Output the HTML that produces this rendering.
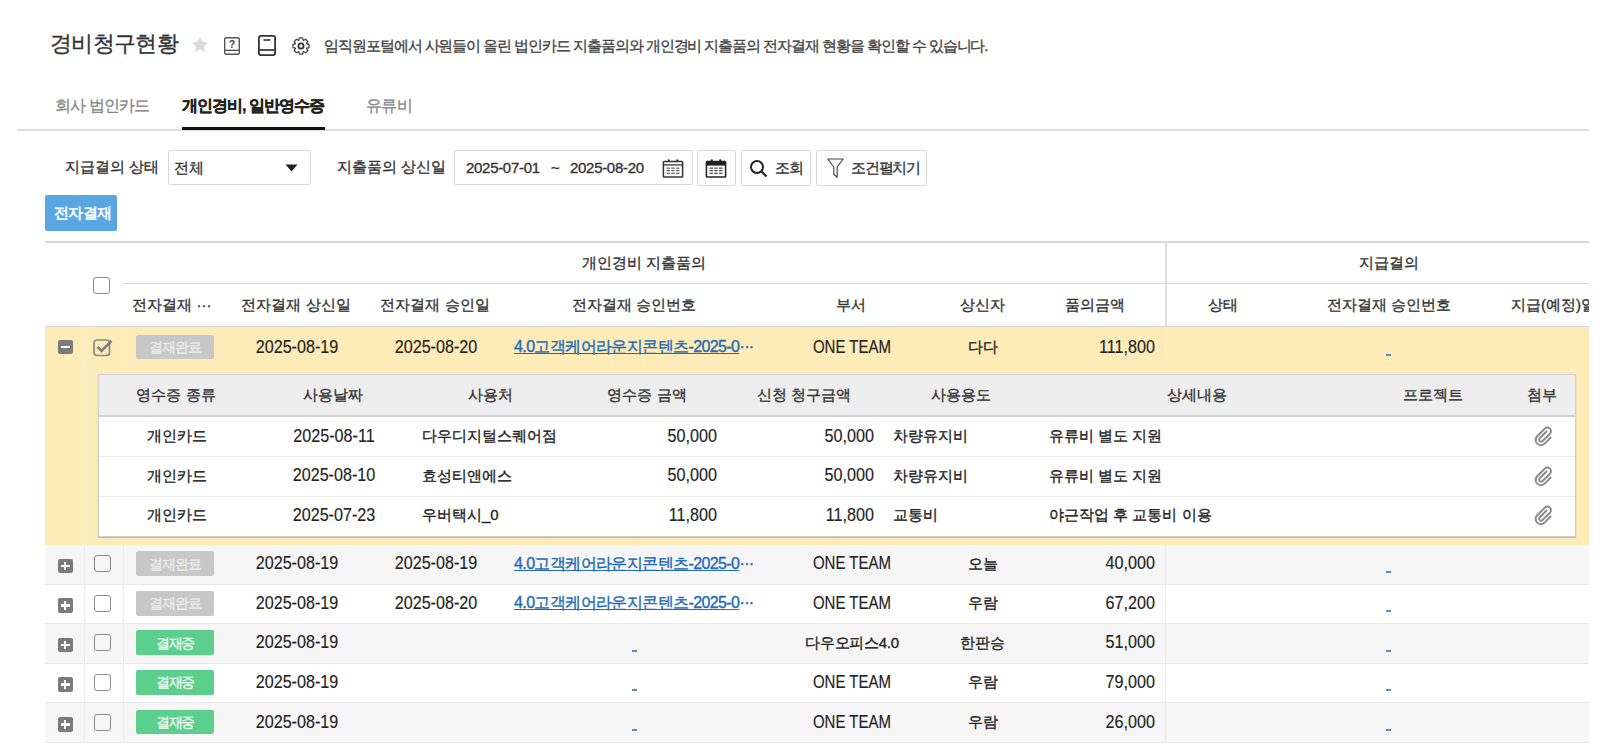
<!DOCTYPE html>
<html><head><meta charset="utf-8">
<style>
*{box-sizing:border-box;margin:0;padding:0}
html,body{width:1600px;height:754px;overflow:hidden;background:#fff}
body{position:relative;font-family:"Liberation Sans",sans-serif;color:#333}
.a{-webkit-text-stroke:0.35px currentColor}
.a{position:absolute;white-space:nowrap;line-height:1}
.box{position:absolute}
.hl{position:absolute;height:1px}
.vl{position:absolute;width:1px}
.c{text-align:center}
.r{text-align:right}
</style></head><body>

<!-- title -->
<div class="a" id="title" style="left:50px;top:33px;font-size:22px;color:#333;letter-spacing:-0.7px">경비청구현황</div>
<svg class="box" style="left:190px;top:35px" width="20" height="20" viewBox="0 0 20 20"><path d="M10 1.5l2.5 5.3 5.7.6-4.3 3.9 1.2 5.7L10 14.1l-5.1 2.9 1.2-5.7L1.8 7.4l5.7-.6z" fill="#d9d9d9"/></svg>
<svg class="box" style="left:222px;top:36px" width="20" height="20" viewBox="0 0 20 20"><rect x="2.7" y="1.7" width="14.6" height="16.6" rx="1.5" fill="none" stroke="#555" stroke-width="1.4"/><line x1="2.7" y1="14.3" x2="17.3" y2="14.3" stroke="#555" stroke-width="1.3"/><text x="10" y="11.8" font-size="10.5" font-weight="bold" text-anchor="middle" fill="#444" font-family="Liberation Sans">?</text></svg>
<svg class="box" style="left:256px;top:34px" width="22" height="23" viewBox="0 0 22 23"><rect x="2.9" y="1.9" width="16.2" height="19.2" rx="2" fill="none" stroke="#333" stroke-width="1.8"/><line x1="2.9" y1="16" x2="19.1" y2="16" stroke="#333" stroke-width="1.7"/><line x1="7.5" y1="6" x2="14.5" y2="6" stroke="#333" stroke-width="1.6"/></svg>
<svg class="box" style="left:290.5px;top:35.5px" width="20" height="20" viewBox="0 0 20 20"><path fill="none" stroke="#444" stroke-width="1.3" stroke-linejoin="round" d="M15.56 7.75 L18.05 8.44 L18.05 11.56 L15.56 12.25 L15.52 12.34 L16.80 14.59 L14.59 16.80 L12.34 15.52 L12.25 15.56 L11.56 18.05 L8.44 18.05 L7.75 15.56 L7.66 15.52 L5.41 16.80 L3.20 14.59 L4.48 12.34 L4.44 12.25 L1.95 11.56 L1.95 8.44 L4.44 7.75 L4.48 7.66 L3.20 5.41 L5.41 3.20 L7.66 4.48 L7.75 4.44 L8.44 1.95 L11.56 1.95 L12.25 4.44 L12.34 4.48 L14.59 3.20 L16.80 5.41 L15.52 7.66Z"/><circle cx="10" cy="10" r="2.6" fill="none" stroke="#333" stroke-width="1.8"/></svg>
<div class="a" id="desc" style="left:324px;top:37.5px;font-size:15px;color:#444;letter-spacing:-1.08px">임직원포털에서 사원들이 올린 법인카드 지출품의와 개인경비 지출품의 전자결재 현황을 확인할 수 있습니다.</div>

<!-- tabs -->
<div class="a" style="left:55px;top:98px;font-size:16px;color:#8a8a8a;letter-spacing:-0.85px">회사 법인카드</div>
<div class="a" style="left:182px;top:98px;font-size:16px;color:#222;font-weight:bold;letter-spacing:-1px">개인경비, 일반영수증</div>
<div class="a" style="left:366px;top:98px;font-size:16px;color:#8a8a8a;letter-spacing:-0.6px">유류비</div>
<div class="hl" style="left:17px;top:129px;width:1572px;height:2px;background:#dedede"></div>
<div class="hl" style="left:182px;top:127px;width:143px;height:3px;background:#111"></div>

<!-- filters -->
<div class="a" style="left:65px;top:159px;font-size:15px;color:#333">지급결의 상태</div>
<div class="box" style="left:168px;top:150px;width:143px;height:35px;border:1px solid #d8d8d8;border-radius:2px"></div>
<div class="a" style="left:174px;top:160px;font-size:15px;color:#333">전체</div>
<svg class="box" style="left:285px;top:164px" width="13" height="8" viewBox="0 0 13 8"><path d="M0.5 0.5h12L6.5 7.5z" fill="#222"/></svg>

<div class="a" style="left:337px;top:159px;font-size:15px;color:#333">지출품의 상신일</div>
<div class="box" style="left:454px;top:150px;width:239px;height:35px;border:1px solid #d8d8d8;border-radius:2px"></div>
<div class="a" style="left:466px;top:160px;font-size:15px;color:#333;letter-spacing:-0.3px">2025-07-01</div><div class="a" style="left:551px;top:160px;font-size:15px;color:#333">~</div><div class="a" style="left:570px;top:160px;font-size:15px;color:#333;letter-spacing:-0.3px">2025-08-20</div>
<svg class="box" style="left:662px;top:158px" width="22" height="20" viewBox="0 0 22 20"><rect x="1.4" y="3.4" width="19.2" height="15.6" rx="0.8" fill="none" stroke="#333" stroke-width="1.5"/><line x1="1.4" y1="6.9" x2="20.6" y2="6.9" stroke="#333" stroke-width="1.3"/><circle cx="6.8" cy="2.4" r="1.1" fill="#333"/><circle cx="15.3" cy="2.4" r="1.1" fill="#333"/><g fill="#555"><rect x="4.5" y="9.6" width="3.5" height="1.1"/><rect x="9.2" y="9.6" width="3.5" height="1.1"/><rect x="14" y="9.6" width="3.5" height="1.1"/><rect x="4.5" y="12.1" width="3.5" height="1.1"/><rect x="9.2" y="12.1" width="3.5" height="1.1"/><rect x="14" y="12.1" width="3.5" height="1.1"/><rect x="4.5" y="14.7" width="3.5" height="1.1"/><rect x="9.2" y="14.7" width="3.5" height="1.1"/><rect x="14" y="14.7" width="3.5" height="1.1"/></g></svg>

<div class="box" style="left:697px;top:150px;width:39px;height:36px;border:1px solid #d8d8d8;border-radius:2px"></div>
<svg class="box" style="left:705px;top:158px" width="22" height="20" viewBox="0 0 22 20"><rect x="1.4" y="3.4" width="19.2" height="15.6" rx="0.8" fill="none" stroke="#222" stroke-width="1.5"/><rect x="1.4" y="3.4" width="19.2" height="4.2" fill="#222"/><circle cx="6.8" cy="2.4" r="1.1" fill="#222"/><circle cx="15.3" cy="2.4" r="1.1" fill="#222"/><g fill="#333"><rect x="4.5" y="9.6" width="3.5" height="1.1"/><rect x="9.2" y="9.6" width="3.5" height="1.1"/><rect x="14" y="9.6" width="3.5" height="1.1"/><rect x="4.5" y="12.1" width="3.5" height="1.1"/><rect x="9.2" y="12.1" width="3.5" height="1.1"/><rect x="14" y="12.1" width="3.5" height="1.1"/><rect x="4.5" y="14.7" width="3.5" height="1.1"/><rect x="9.2" y="14.7" width="3.5" height="1.1"/><rect x="14" y="14.7" width="3.5" height="1.1"/></g></svg>

<div class="box" style="left:741px;top:150px;width:70px;height:36px;border:1px solid #d8d8d8;border-radius:2px"></div>
<svg class="box" style="left:749px;top:159px" width="20" height="19" viewBox="0 0 20 19"><circle cx="8" cy="8" r="6" fill="none" stroke="#222" stroke-width="2"/><line x1="12.3" y1="12.3" x2="17.5" y2="17.5" stroke="#222" stroke-width="2.2"/></svg>
<div class="a" style="left:775px;top:160px;font-size:15px;color:#333;letter-spacing:-0.6px">조회</div>

<div class="box" style="left:816px;top:150px;width:111px;height:36px;border:1px solid #d8d8d8;border-radius:2px"></div>
<svg class="box" style="left:826px;top:157px" width="19" height="22" viewBox="0 0 19 22"><path d="M1.8 2h15.4l-6 8v10.2l-3.4-2.7V10z" fill="none" stroke="#444" stroke-width="1.15" stroke-linejoin="round"/></svg>
<div class="a" style="left:851px;top:160px;font-size:15px;color:#333;letter-spacing:-1.2px">조건펼치기</div>

<div class="box" style="left:45px;top:195px;width:72px;height:36px;background:#5aa6e3;border-radius:2px"></div>
<div class="a" style="left:54px;top:205px;font-size:15px;color:#fff;letter-spacing:-0.6px;-webkit-text-stroke:0.6px #fff">전자결재</div>

<div class="box" style="left:45px;top:241px;width:1544px;height:1.5px;background:#d6d6d6;"></div>
<div class="box" style="left:123px;top:283px;width:1466px;height:1px;background:#dcdcdc;"></div>
<div class="box" style="left:45px;top:325.5px;width:1544px;height:1.5px;background:#d6d6d6;"></div>
<div class="box" style="left:1165px;top:241px;width:1.5px;height:85px;background:#dcdcdc;"></div>
<div class="a" style="left:444px;width:400px;text-align:center;top:253.0px;line-height:20px;font-size:15px;color:#333;">개인경비 지출품의</div>
<div class="a" style="left:1189px;width:400px;text-align:center;top:253.0px;line-height:20px;font-size:15px;color:#333;">지급결의</div>
<div class="box" style="left:92.5px;top:277px;width:17px;height:17px;background:#fff;border:1.6px solid #8c8c8c;border-radius:3px;"></div>
<div class="a" style="left:-28px;width:400px;text-align:center;top:295.0px;line-height:20px;font-size:15px;color:#333;">전자결재 ···</div>
<div class="a" style="left:96px;width:400px;text-align:center;top:295.0px;line-height:20px;font-size:15px;color:#333;">전자결재 상신일</div>
<div class="a" style="left:235px;width:400px;text-align:center;top:295.0px;line-height:20px;font-size:15px;color:#333;">전자결재 승인일</div>
<div class="a" style="left:434px;width:400px;text-align:center;top:295.0px;line-height:20px;font-size:15px;color:#333;">전자결재 승인번호</div>
<div class="a" style="left:651px;width:400px;text-align:center;top:295.0px;line-height:20px;font-size:15px;color:#333;">부서</div>
<div class="a" style="left:782px;width:400px;text-align:center;top:295.0px;line-height:20px;font-size:15px;color:#333;">상신자</div>
<div class="a" style="left:895px;width:400px;text-align:center;top:295.0px;line-height:20px;font-size:15px;color:#333;">품의금액</div>
<div class="a" style="left:1023px;width:400px;text-align:center;top:295.0px;line-height:20px;font-size:15px;color:#333;">상태</div>
<div class="a" style="left:1189px;width:400px;text-align:center;top:295.0px;line-height:20px;font-size:15px;color:#333;">전자결재 승인번호</div>
<div class="box" style="left:1497px;top:295px;width:92px;height:22px;overflow:hidden"><div class="a" style="left:14px;top:0;line-height:20px;font-size:15px;color:#333">지급(예정)일</div></div>
<div class="box" style="left:45px;top:327px;width:1544px;height:218px;background:#fdebb8;"></div>
<div class="box" style="left:84px;top:327px;width:1px;height:218px;background:#f9eed2;"></div>
<div class="box" style="left:123px;top:327px;width:1px;height:41px;background:#f9eed2;"></div>
<div class="box" style="left:1165px;top:327px;width:1px;height:41px;background:#f9eed2;"></div>
<div class="box" style="left:57.8px;top:339.6px;width:14.8px;height:14.8px;background:#7b7b7b;border-radius:2px;"></div>
<div class="box" style="left:60.8px;top:345.8px;width:8.8px;height:2.5px;background:#fff;"></div>
<svg class="box" style="left:93px;top:338px" width="22" height="19" viewBox="0 0 22 19"><rect x="1" y="2" width="15.5" height="15.5" rx="3" fill="none" stroke="#8a8a8a" stroke-width="1.7"/><path d="M4.5 8.8l4 4 10-10" fill="none" stroke="#7d7d7d" stroke-width="2.6"/></svg>
<div class="box" style="left:136px;top:334.7px;width:78px;height:24.6px;background:#c8c8c8;border-radius:2px;"></div>
<div class="a" style="left:-25px;width:400px;text-align:center;top:337.0px;line-height:20px;font-size:14px;color:#ebebeb;letter-spacing:-1.1px;">결재완료</div>
<div class="a" style="left:96.5px;width:400px;text-align:center;transform:scaleX(0.85);transform-origin:center center;top:336.5px;line-height:20px;font-size:19px;color:#222;-webkit-text-stroke:0.15px currentColor;">2025-08-19</div>
<div class="a" style="left:235.5px;width:400px;text-align:center;transform:scaleX(0.85);transform-origin:center center;top:336.5px;line-height:20px;font-size:19px;color:#222;-webkit-text-stroke:0.15px currentColor;">2025-08-20</div>
<div class="a" style="left:514px;top:337px;line-height:20px;font-size:16px;color:#2169b9;letter-spacing:-0.6px"><span style="text-decoration:underline">4.0고객케어라운지콘텐츠-2025-0</span>···</div>
<div class="a" style="left:651.8px;width:400px;text-align:center;transform:scaleX(0.79);transform-origin:center center;top:336.5px;line-height:20px;font-size:19px;color:#222;-webkit-text-stroke:0.15px currentColor;">ONE TEAM</div>
<div class="a" style="left:782.5px;width:400px;text-align:center;top:337.0px;line-height:20px;font-size:15px;color:#222;">다다</div>
<div class="a" style="left:855px;width:300px;text-align:right;transform:scaleX(0.85);transform-origin:right center;top:336.5px;line-height:20px;font-size:19px;color:#222;-webkit-text-stroke:0.15px currentColor;">111,800</div>
<div class="box" style="left:1386px;top:354px;width:5px;height:2px;background:#5a8cc4;"></div>
<div class="box" style="left:98px;top:374px;width:1478px;height:163px;background:#fff;border:1px solid #cfcfcf;box-shadow:0 1px 1px #bdbdbd;"></div>
<div class="box" style="left:99px;top:375px;width:1476px;height:40px;background:#eeeeee;"></div>
<div class="box" style="left:99px;top:415px;width:1476px;height:1.5px;background:#d3d3d3;"></div>
<div class="box" style="left:99px;top:456px;width:1476px;height:1px;background:#ebebeb;"></div>
<div class="box" style="left:99px;top:496px;width:1476px;height:1px;background:#ebebeb;"></div>
<div class="a" style="left:-24px;width:400px;text-align:center;top:385.0px;line-height:20px;font-size:15px;color:#333;">영수증 종류</div>
<div class="a" style="left:133px;width:400px;text-align:center;top:385.0px;line-height:20px;font-size:15px;color:#333;">사용날짜</div>
<div class="a" style="left:290px;width:400px;text-align:center;top:385.0px;line-height:20px;font-size:15px;color:#333;">사용처</div>
<div class="a" style="left:447px;width:400px;text-align:center;top:385.0px;line-height:20px;font-size:15px;color:#333;">영수증 금액</div>
<div class="a" style="left:604px;width:400px;text-align:center;top:385.0px;line-height:20px;font-size:15px;color:#333;">신청 청구금액</div>
<div class="a" style="left:761px;width:400px;text-align:center;top:385.0px;line-height:20px;font-size:15px;color:#333;">사용용도</div>
<div class="a" style="left:997px;width:400px;text-align:center;top:385.0px;line-height:20px;font-size:15px;color:#333;">상세내용</div>
<div class="a" style="left:1233px;width:400px;text-align:center;top:385.0px;line-height:20px;font-size:15px;color:#333;">프로젝트</div>
<div class="a" style="left:1342px;width:400px;text-align:center;top:385.0px;line-height:20px;font-size:15px;color:#333;">첨부</div>
<div class="a" style="left:-23.5px;width:400px;text-align:center;top:426.0px;line-height:20px;font-size:15px;color:#222;">개인카드</div>
<div class="a" style="left:133.5px;width:400px;text-align:center;transform:scaleX(0.85);transform-origin:center center;top:425.5px;line-height:20px;font-size:19px;color:#222;-webkit-text-stroke:0.15px currentColor;">2025-08-11</div>
<div class="a" style="left:422px;top:426.0px;line-height:20px;font-size:15px;color:#222;">다우디지털스퀘어점</div>
<div class="a" style="left:417px;width:300px;text-align:right;transform:scaleX(0.85);transform-origin:right center;top:425.5px;line-height:20px;font-size:19px;color:#222;-webkit-text-stroke:0.15px currentColor;">50,000</div>
<div class="a" style="left:574px;width:300px;text-align:right;transform:scaleX(0.85);transform-origin:right center;top:425.5px;line-height:20px;font-size:19px;color:#222;-webkit-text-stroke:0.15px currentColor;">50,000</div>
<div class="a" style="left:892.5px;top:426.0px;line-height:20px;font-size:15px;color:#222;">차량유지비</div>
<div class="a" style="left:1049px;top:426.0px;line-height:20px;font-size:15px;color:#222;">유류비 별도 지원</div>
<svg class="box" style="left:1533px;top:426px" width="21" height="21" viewBox="0 0 21 21"><path d="M13.5 5.5l-7 7a2 2 0 0 0 2.8 2.8l7.6-7.6a3.6 3.6 0 0 0-5.1-5.1l-7.6 7.6a5.2 5.2 0 0 0 7.4 7.4l6-6" fill="none" stroke="#8a8a8a" stroke-width="2" stroke-linecap="round"/></svg>
<div class="a" style="left:-23.5px;width:400px;text-align:center;top:465.5px;line-height:20px;font-size:15px;color:#222;">개인카드</div>
<div class="a" style="left:133.5px;width:400px;text-align:center;transform:scaleX(0.85);transform-origin:center center;top:465.0px;line-height:20px;font-size:19px;color:#222;-webkit-text-stroke:0.15px currentColor;">2025-08-10</div>
<div class="a" style="left:422px;top:465.5px;line-height:20px;font-size:15px;color:#222;">효성티앤에스</div>
<div class="a" style="left:417px;width:300px;text-align:right;transform:scaleX(0.85);transform-origin:right center;top:465.0px;line-height:20px;font-size:19px;color:#222;-webkit-text-stroke:0.15px currentColor;">50,000</div>
<div class="a" style="left:574px;width:300px;text-align:right;transform:scaleX(0.85);transform-origin:right center;top:465.0px;line-height:20px;font-size:19px;color:#222;-webkit-text-stroke:0.15px currentColor;">50,000</div>
<div class="a" style="left:892.5px;top:465.5px;line-height:20px;font-size:15px;color:#222;">차량유지비</div>
<div class="a" style="left:1049px;top:465.5px;line-height:20px;font-size:15px;color:#222;">유류비 별도 지원</div>
<svg class="box" style="left:1533px;top:465.5px" width="21" height="21" viewBox="0 0 21 21"><path d="M13.5 5.5l-7 7a2 2 0 0 0 2.8 2.8l7.6-7.6a3.6 3.6 0 0 0-5.1-5.1l-7.6 7.6a5.2 5.2 0 0 0 7.4 7.4l6-6" fill="none" stroke="#8a8a8a" stroke-width="2" stroke-linecap="round"/></svg>
<div class="a" style="left:-23.5px;width:400px;text-align:center;top:505.0px;line-height:20px;font-size:15px;color:#222;">개인카드</div>
<div class="a" style="left:133.5px;width:400px;text-align:center;transform:scaleX(0.85);transform-origin:center center;top:504.5px;line-height:20px;font-size:19px;color:#222;-webkit-text-stroke:0.15px currentColor;">2025-07-23</div>
<div class="a" style="left:422px;top:505.0px;line-height:20px;font-size:15px;color:#222;">우버택시_0</div>
<div class="a" style="left:417px;width:300px;text-align:right;transform:scaleX(0.85);transform-origin:right center;top:504.5px;line-height:20px;font-size:19px;color:#222;-webkit-text-stroke:0.15px currentColor;">11,800</div>
<div class="a" style="left:574px;width:300px;text-align:right;transform:scaleX(0.85);transform-origin:right center;top:504.5px;line-height:20px;font-size:19px;color:#222;-webkit-text-stroke:0.15px currentColor;">11,800</div>
<div class="a" style="left:892.5px;top:505.0px;line-height:20px;font-size:15px;color:#222;">교통비</div>
<div class="a" style="left:1049px;top:505.0px;line-height:20px;font-size:15px;color:#222;">야근작업 후 교통비 이용</div>
<svg class="box" style="left:1533px;top:505px" width="21" height="21" viewBox="0 0 21 21"><path d="M13.5 5.5l-7 7a2 2 0 0 0 2.8 2.8l7.6-7.6a3.6 3.6 0 0 0-5.1-5.1l-7.6 7.6a5.2 5.2 0 0 0 7.4 7.4l6-6" fill="none" stroke="#8a8a8a" stroke-width="2" stroke-linecap="round"/></svg>
<div class="box" style="left:45px;top:545px;width:1544px;height:39.5px;background:#f6f6f6;"></div>
<div class="box" style="left:45px;top:583.5px;width:1544px;height:1px;background:#e8e8e8;"></div>
<div class="box" style="left:84px;top:545px;width:1px;height:39.5px;background:#ebebeb;"></div>
<div class="box" style="left:123px;top:545px;width:1px;height:39.5px;background:#ebebeb;"></div>
<div class="box" style="left:1165px;top:545px;width:1px;height:39.5px;background:#ebebeb;"></div>
<div class="box" style="left:57.8px;top:558.65px;width:14.8px;height:14.8px;background:#7b7b7b;border-radius:2px;"></div>
<div class="box" style="left:60.8px;top:564.8499999999999px;width:8.8px;height:2.5px;background:#fff;"></div>
<div class="box" style="left:63.95px;top:561.65px;width:2.5px;height:8.8px;background:#fff;"></div>
<div class="box" style="left:93.5px;top:555.25px;width:17px;height:17px;background:#f6f6f6;border:1.6px solid #8c8c8c;border-radius:3px;"></div>
<div class="box" style="left:136px;top:551.45px;width:78px;height:24.6px;background:#c8c8c8;border-radius:2px;"></div>
<div class="a" style="left:-25px;width:400px;text-align:center;top:553.75px;line-height:20px;font-size:14px;color:#ebebeb;letter-spacing:-1.1px;">결재완료</div>
<div class="a" style="left:96.5px;width:400px;text-align:center;transform:scaleX(0.85);transform-origin:center center;top:553.25px;line-height:20px;font-size:19px;color:#222;-webkit-text-stroke:0.15px currentColor;">2025-08-19</div>
<div class="a" style="left:235.5px;width:400px;text-align:center;transform:scaleX(0.85);transform-origin:center center;top:553.25px;line-height:20px;font-size:19px;color:#222;-webkit-text-stroke:0.15px currentColor;">2025-08-19</div>
<div class="a" style="left:514px;top:553.75px;line-height:20px;font-size:16px;color:#2169b9;letter-spacing:-0.6px"><span style="text-decoration:underline">4.0고객케어라운지콘텐츠-2025-0</span>···</div>
<div class="a" style="left:651.8px;width:400px;text-align:center;transform:scaleX(0.79);transform-origin:center center;top:553.25px;line-height:20px;font-size:19px;color:#222;-webkit-text-stroke:0.15px currentColor;">ONE TEAM</div>
<div class="a" style="left:782.5px;width:400px;text-align:center;top:553.75px;line-height:20px;font-size:15px;color:#222;">오늘</div>
<div class="a" style="left:855px;width:300px;text-align:right;transform:scaleX(0.85);transform-origin:right center;top:553.25px;line-height:20px;font-size:19px;color:#222;-webkit-text-stroke:0.15px currentColor;">40,000</div>
<div class="box" style="left:1386px;top:571px;width:5px;height:2px;background:#5a8cc4;"></div>
<div class="box" style="left:45px;top:584.5px;width:1544px;height:39.5px;background:#fff;"></div>
<div class="box" style="left:45px;top:623px;width:1544px;height:1px;background:#e8e8e8;"></div>
<div class="box" style="left:84px;top:584.5px;width:1px;height:39.5px;background:#ebebeb;"></div>
<div class="box" style="left:123px;top:584.5px;width:1px;height:39.5px;background:#ebebeb;"></div>
<div class="box" style="left:1165px;top:584.5px;width:1px;height:39.5px;background:#ebebeb;"></div>
<div class="box" style="left:57.8px;top:598.15px;width:14.8px;height:14.8px;background:#7b7b7b;border-radius:2px;"></div>
<div class="box" style="left:60.8px;top:604.3499999999999px;width:8.8px;height:2.5px;background:#fff;"></div>
<div class="box" style="left:63.95px;top:601.15px;width:2.5px;height:8.8px;background:#fff;"></div>
<div class="box" style="left:93.5px;top:594.75px;width:17px;height:17px;background:#fff;border:1.6px solid #8c8c8c;border-radius:3px;"></div>
<div class="box" style="left:136px;top:590.95px;width:78px;height:24.6px;background:#c8c8c8;border-radius:2px;"></div>
<div class="a" style="left:-25px;width:400px;text-align:center;top:593.25px;line-height:20px;font-size:14px;color:#ebebeb;letter-spacing:-1.1px;">결재완료</div>
<div class="a" style="left:96.5px;width:400px;text-align:center;transform:scaleX(0.85);transform-origin:center center;top:592.75px;line-height:20px;font-size:19px;color:#222;-webkit-text-stroke:0.15px currentColor;">2025-08-19</div>
<div class="a" style="left:235.5px;width:400px;text-align:center;transform:scaleX(0.85);transform-origin:center center;top:592.75px;line-height:20px;font-size:19px;color:#222;-webkit-text-stroke:0.15px currentColor;">2025-08-20</div>
<div class="a" style="left:514px;top:593.25px;line-height:20px;font-size:16px;color:#2169b9;letter-spacing:-0.6px"><span style="text-decoration:underline">4.0고객케어라운지콘텐츠-2025-0</span>···</div>
<div class="a" style="left:651.8px;width:400px;text-align:center;transform:scaleX(0.79);transform-origin:center center;top:592.75px;line-height:20px;font-size:19px;color:#222;-webkit-text-stroke:0.15px currentColor;">ONE TEAM</div>
<div class="a" style="left:782.5px;width:400px;text-align:center;top:593.25px;line-height:20px;font-size:15px;color:#222;">우람</div>
<div class="a" style="left:855px;width:300px;text-align:right;transform:scaleX(0.85);transform-origin:right center;top:592.75px;line-height:20px;font-size:19px;color:#222;-webkit-text-stroke:0.15px currentColor;">67,200</div>
<div class="box" style="left:1386px;top:610px;width:5px;height:2px;background:#5a8cc4;"></div>
<div class="box" style="left:45px;top:624px;width:1544px;height:39.5px;background:#f6f6f6;"></div>
<div class="box" style="left:45px;top:662.5px;width:1544px;height:1px;background:#e8e8e8;"></div>
<div class="box" style="left:84px;top:624px;width:1px;height:39.5px;background:#ebebeb;"></div>
<div class="box" style="left:123px;top:624px;width:1px;height:39.5px;background:#ebebeb;"></div>
<div class="box" style="left:1165px;top:624px;width:1px;height:39.5px;background:#ebebeb;"></div>
<div class="box" style="left:57.8px;top:637.65px;width:14.8px;height:14.8px;background:#7b7b7b;border-radius:2px;"></div>
<div class="box" style="left:60.8px;top:643.8499999999999px;width:8.8px;height:2.5px;background:#fff;"></div>
<div class="box" style="left:63.95px;top:640.65px;width:2.5px;height:8.8px;background:#fff;"></div>
<div class="box" style="left:93.5px;top:634.25px;width:17px;height:17px;background:#f6f6f6;border:1.6px solid #8c8c8c;border-radius:3px;"></div>
<div class="box" style="left:136px;top:630.45px;width:78px;height:24.6px;background:#5ccf8d;border-radius:2px;"></div>
<div class="a" style="left:-25px;width:400px;text-align:center;top:632.75px;line-height:20px;font-size:14px;color:#eefaf2;letter-spacing:-1.1px;">결재중</div>
<div class="a" style="left:96.5px;width:400px;text-align:center;transform:scaleX(0.85);transform-origin:center center;top:632.25px;line-height:20px;font-size:19px;color:#222;-webkit-text-stroke:0.15px currentColor;">2025-08-19</div>
<div class="box" style="left:632px;top:650px;width:5px;height:2px;background:#5a8cc4;"></div>
<div class="a" style="left:652px;width:400px;text-align:center;top:632.75px;line-height:20px;font-size:15px;color:#222;letter-spacing:-0.3px;">다우오피스4.0</div>
<div class="a" style="left:782.5px;width:400px;text-align:center;top:632.75px;line-height:20px;font-size:15px;color:#222;">한판승</div>
<div class="a" style="left:855px;width:300px;text-align:right;transform:scaleX(0.85);transform-origin:right center;top:632.25px;line-height:20px;font-size:19px;color:#222;-webkit-text-stroke:0.15px currentColor;">51,000</div>
<div class="box" style="left:1386px;top:650px;width:5px;height:2px;background:#5a8cc4;"></div>
<div class="box" style="left:45px;top:663.5px;width:1544px;height:39.5px;background:#fff;"></div>
<div class="box" style="left:45px;top:702px;width:1544px;height:1px;background:#e8e8e8;"></div>
<div class="box" style="left:84px;top:663.5px;width:1px;height:39.5px;background:#ebebeb;"></div>
<div class="box" style="left:123px;top:663.5px;width:1px;height:39.5px;background:#ebebeb;"></div>
<div class="box" style="left:1165px;top:663.5px;width:1px;height:39.5px;background:#ebebeb;"></div>
<div class="box" style="left:57.8px;top:677.15px;width:14.8px;height:14.8px;background:#7b7b7b;border-radius:2px;"></div>
<div class="box" style="left:60.8px;top:683.3499999999999px;width:8.8px;height:2.5px;background:#fff;"></div>
<div class="box" style="left:63.95px;top:680.15px;width:2.5px;height:8.8px;background:#fff;"></div>
<div class="box" style="left:93.5px;top:673.75px;width:17px;height:17px;background:#fff;border:1.6px solid #8c8c8c;border-radius:3px;"></div>
<div class="box" style="left:136px;top:669.95px;width:78px;height:24.6px;background:#5ccf8d;border-radius:2px;"></div>
<div class="a" style="left:-25px;width:400px;text-align:center;top:672.25px;line-height:20px;font-size:14px;color:#eefaf2;letter-spacing:-1.1px;">결재중</div>
<div class="a" style="left:96.5px;width:400px;text-align:center;transform:scaleX(0.85);transform-origin:center center;top:671.75px;line-height:20px;font-size:19px;color:#222;-webkit-text-stroke:0.15px currentColor;">2025-08-19</div>
<div class="box" style="left:632px;top:689px;width:5px;height:2px;background:#5a8cc4;"></div>
<div class="a" style="left:651.8px;width:400px;text-align:center;transform:scaleX(0.79);transform-origin:center center;top:671.75px;line-height:20px;font-size:19px;color:#222;-webkit-text-stroke:0.15px currentColor;">ONE TEAM</div>
<div class="a" style="left:782.5px;width:400px;text-align:center;top:672.25px;line-height:20px;font-size:15px;color:#222;">우람</div>
<div class="a" style="left:855px;width:300px;text-align:right;transform:scaleX(0.85);transform-origin:right center;top:671.75px;line-height:20px;font-size:19px;color:#222;-webkit-text-stroke:0.15px currentColor;">79,000</div>
<div class="box" style="left:1386px;top:689px;width:5px;height:2px;background:#5a8cc4;"></div>
<div class="box" style="left:45px;top:703px;width:1544px;height:40px;background:#f6f6f6;"></div>
<div class="box" style="left:45px;top:742px;width:1544px;height:1px;background:#e8e8e8;"></div>
<div class="box" style="left:84px;top:703px;width:1px;height:40px;background:#ebebeb;"></div>
<div class="box" style="left:123px;top:703px;width:1px;height:40px;background:#ebebeb;"></div>
<div class="box" style="left:1165px;top:703px;width:1px;height:40px;background:#ebebeb;"></div>
<div class="box" style="left:57.8px;top:716.9px;width:14.8px;height:14.8px;background:#7b7b7b;border-radius:2px;"></div>
<div class="box" style="left:60.8px;top:723.0999999999999px;width:8.8px;height:2.5px;background:#fff;"></div>
<div class="box" style="left:63.95px;top:719.9px;width:2.5px;height:8.8px;background:#fff;"></div>
<div class="box" style="left:93.5px;top:713.5px;width:17px;height:17px;background:#f6f6f6;border:1.6px solid #8c8c8c;border-radius:3px;"></div>
<div class="box" style="left:136px;top:709.7px;width:78px;height:24.6px;background:#5ccf8d;border-radius:2px;"></div>
<div class="a" style="left:-25px;width:400px;text-align:center;top:712.0px;line-height:20px;font-size:14px;color:#eefaf2;letter-spacing:-1.1px;">결재중</div>
<div class="a" style="left:96.5px;width:400px;text-align:center;transform:scaleX(0.85);transform-origin:center center;top:711.5px;line-height:20px;font-size:19px;color:#222;-webkit-text-stroke:0.15px currentColor;">2025-08-19</div>
<div class="box" style="left:632px;top:729px;width:5px;height:2px;background:#5a8cc4;"></div>
<div class="a" style="left:651.8px;width:400px;text-align:center;transform:scaleX(0.79);transform-origin:center center;top:711.5px;line-height:20px;font-size:19px;color:#222;-webkit-text-stroke:0.15px currentColor;">ONE TEAM</div>
<div class="a" style="left:782.5px;width:400px;text-align:center;top:712.0px;line-height:20px;font-size:15px;color:#222;">우람</div>
<div class="a" style="left:855px;width:300px;text-align:right;transform:scaleX(0.85);transform-origin:right center;top:711.5px;line-height:20px;font-size:19px;color:#222;-webkit-text-stroke:0.15px currentColor;">26,000</div>
<div class="box" style="left:1386px;top:729px;width:5px;height:2px;background:#5a8cc4;"></div>
</body></html>
